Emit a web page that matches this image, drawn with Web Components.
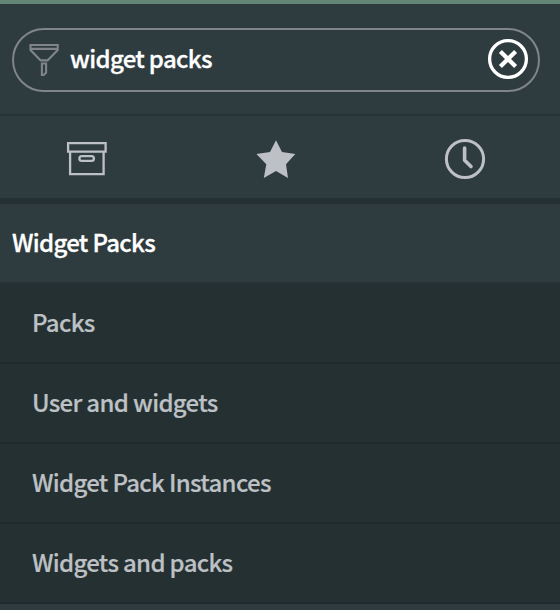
<!DOCTYPE html>
<html lang="en"><head><meta charset="utf-8"><title>Navigator</title>
<style>
html,body{margin:0;height:100%;background:#2e3c40}
body{overflow:hidden;font:500 24px/32px "Noto Sans CJK SC","Noto Sans",sans-serif;color:#fff;--track:-.68px;-webkit-text-stroke:.3px currentColor}
</style></head><body>
<nav-panel>
<nav-search slot="search">widget packs</nav-search>
<nav-tabs slot="tabs"></nav-tabs>
<nav-group>Widget Packs</nav-group>
<nav-item>Packs</nav-item>
<nav-item>User and widgets</nav-item>
<nav-item>Widget Pack Instances</nav-item>
<nav-item>Widgets and packs</nav-item>
</nav-panel>
<script>
function define(name, html){
  customElements.define(name, class extends HTMLElement{
    constructor(){ super(); this.attachShadow({mode:'open'}).innerHTML = html; }
  });
}
define('nav-panel', `<style>
:host{display:flex;flex-direction:column;width:560px;height:610px;box-sizing:border-box;border-top:4px solid #648676;background:#2e3c40;overflow:hidden}
</style><slot name="search"></slot><slot name="tabs"></slot><slot></slot>`);
define('nav-search', `<style>
:host{display:block;flex:none;height:112px;box-sizing:border-box;padding:24px 20px 22px 12px;border-bottom:2px solid #273437}
.pill{height:64px;box-sizing:border-box;border:2px solid #80858d;border-radius:32px;display:flex;align-items:center;padding:0 10px 2px 14px}
.text{flex:1;padding:0 0 2px 12px;letter-spacing:var(--track,0)}
svg{display:block;flex:none;overflow:visible}
</style><div class="pill">
<svg width="30" height="34" viewBox="0 0 30 34" fill="none" stroke="#80858d" stroke-width="2.1"><path d="M2.5 3H29.7V8L19.6 18.4H12.7L2.5 8ZM2.5 6.9H29.7M13.9 21.5H18.1V30.6L15.8 33H13.9Z"/></svg>
<span class="text"><slot></slot></span>
<svg width="40" height="40" viewBox="0 0 40 40" fill="none" stroke="#fff" stroke-width="3.3"><circle cx="20" cy="20" r="18.4"/><path stroke-width="4.2" d="M12.4 12.4 27.6 27.6M27.6 12.4 12.4 27.6"/></svg>
</div>`);
define('nav-tabs', `<style>
:host{display:flex;flex:none;height:88px;box-sizing:border-box;padding:0 74px 0 66px;border-bottom:6px solid #243031;justify-content:space-between;align-items:center;color:#bdc0c5}
svg{display:block;overflow:visible}
</style>
<svg width="42" height="42" viewBox="0 0 42 42" fill="none" stroke="currentColor" stroke-width="2.3"><path d="M2.1 7.1H39.6V15.6H2.1ZM4.1 15.6V38.2H37.6V15.6"/><rect x="13.4" y="20.2" width="14.5" height="4.7" rx="2.35"/></svg>
<svg width="42" height="42" viewBox="0 0 42 42" fill="currentColor"><path d="M21 4.2 27 15.9 40.3 18 31 28.3 33 42 21 35.1 8.8 42 11.3 28.3 1.4 18 15 15.9Z"/></svg>
<svg width="42" height="42" viewBox="0 0 42 42" fill="none" stroke="currentColor" stroke-width="3"><circle cx="21" cy="23" r="18.6"/><path stroke-width="3.6" stroke-linecap="round" stroke-linejoin="round" d="M20.6 12V24.2L27 30.6"/></svg>`);
define('nav-group', `<style>
:host{display:flex;flex:none;align-items:center;height:80px;box-sizing:border-box;padding:0 12px 2px;border-bottom:2px solid #263335;letter-spacing:var(--track,0)}
</style><slot></slot>`);
define('nav-item', `<style>
:host{display:flex;flex:none;align-items:center;height:80px;box-sizing:border-box;padding:0 32px 2px;background:#243031;border-bottom:2px solid #202b2d;color:#bdc0c5;letter-spacing:var(--track,0);-webkit-text-stroke:.2px currentColor}
</style><slot></slot>`);
</script></body></html>
